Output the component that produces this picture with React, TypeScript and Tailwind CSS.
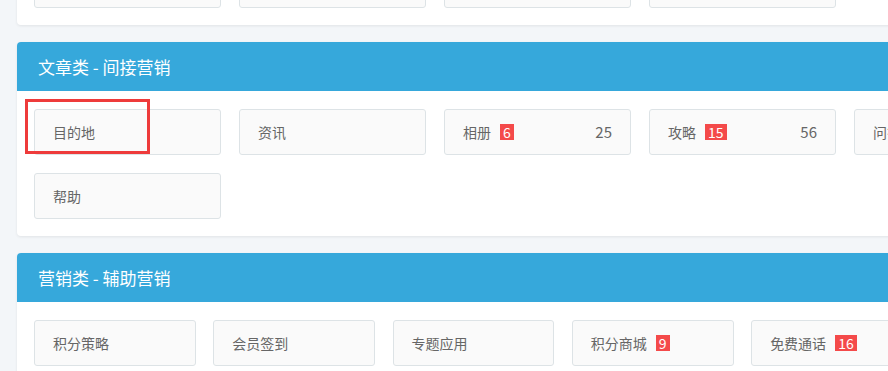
import React from 'react';

type Item = { name: string; badge?: number; count?: number };

const topItems: Item[] = [{ name: '' }, { name: '' }, { name: '' }, { name: '' }];

const articleItems: Item[] = [
  { name: '目的地' },
  { name: '资讯' },
  { name: '相册', badge: 6, count: 25 },
  { name: '攻略', badge: 15, count: 56 },
  { name: '问答' },
  { name: '帮助' },
];

const marketingItems: Item[] = [
  { name: '积分策略' },
  { name: '会员签到' },
  { name: '专题应用' },
  { name: '积分商城', badge: 9 },
  { name: '免费通话', badge: 16 },
  { name: '优惠券' },
];

const font = { fontFamily: '"Noto Sans CJK SC", "Noto Sans", sans-serif' };

const Card: React.FC<{ item: Item; wide?: boolean }> = ({ item, wide }) => (
  <div
    className={`${wide ? 'w-[187px]' : 'w-[161.7px]'} shrink-0 h-[46px] border border-[#dde3e6] bg-[#fafafa] rounded-[3px] flex items-center pl-[18px] pr-[18px] text-[14px] text-[#666]`}
  >
    <span>{item.name}</span>
    {item.badge !== undefined && (
      <span className="ml-[9px] h-[16px] px-[3px] bg-[#f44a4a] text-white text-[14px] leading-[16px] flex items-center">
        {item.badge}
      </span>
    )}
    {item.count !== undefined && <span className="ml-auto text-[15px]">{item.count}</span>}
  </div>
);

const Panel: React.FC<{ title?: string; items: Item[]; wide?: boolean }> = ({ title, items, wide }) => (
  <div className="bg-white rounded-[4px] shadow-[0_1px_3px_rgba(0,0,0,0.08)] overflow-hidden">
    {title && (
      <div className="h-[49px] bg-[#36a8db] flex items-center pl-[21px] text-white text-[17px]">{title}</div>
    )}
    <div
      className={`px-[17px] pt-[18px] pb-[17px] flex ${wide ? 'flex-wrap gap-[18px]' : 'flex-nowrap gap-[17.6px]'}`}
    >
      {items.map((item, i) => (
        <Card key={i} item={item} wide={wide} />
      ))}
    </div>
  </div>
);

const App: React.FC = () => {
  return (
    <div className="w-[888px] h-[371px] overflow-hidden bg-[#f3f6f9] relative" style={font}>
      <div className="w-[1041px] ml-[17px] -mt-[56px] flex flex-col gap-[17px]">
        <Panel items={topItems} wide />
        <Panel title="文章类 - 间接营销" items={articleItems} wide />
        <Panel title="营销类 - 辅助营销" items={marketingItems} />
      </div>
      <div className="absolute left-[25px] top-[99px] w-[125px] h-[55px] border-[3px] border-[#ee3b3b]" />
    </div>
  );
};

export default App;
